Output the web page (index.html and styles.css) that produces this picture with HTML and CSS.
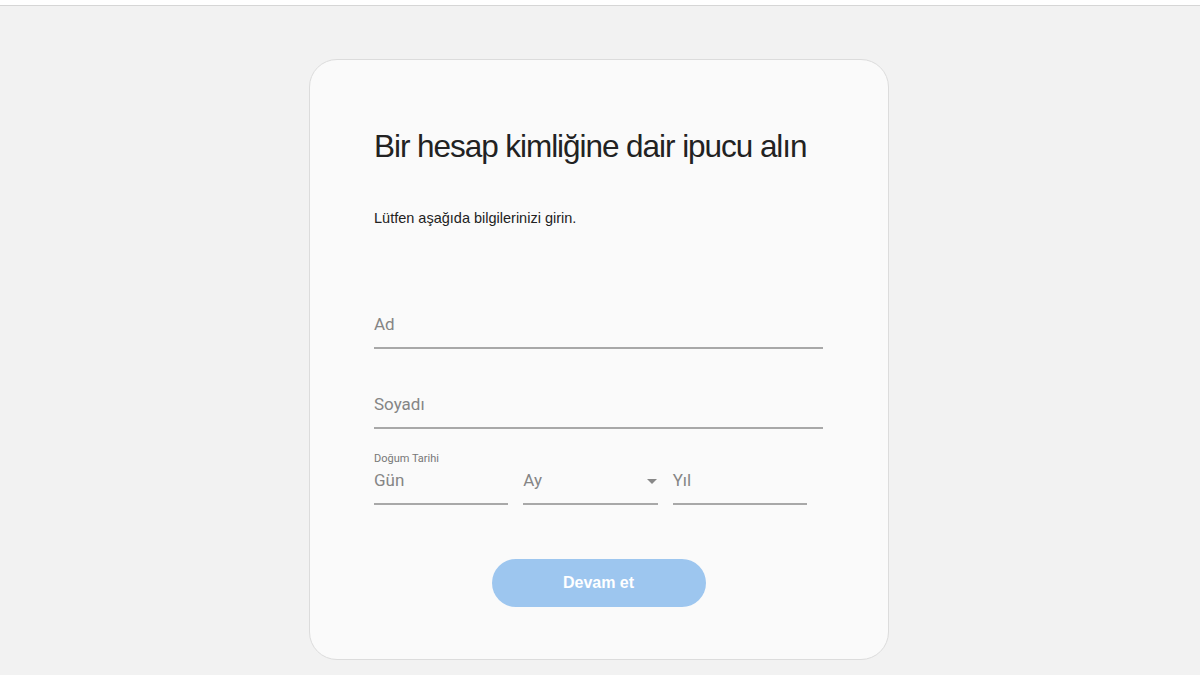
FILE: index.html
```html
<!DOCTYPE html>
<html lang="tr">
<head>
<meta charset="utf-8">
<link rel="stylesheet" href="styles.css">
</head>
<body>
<div class="topbar"></div>
<main class="page">
  <section class="card">
    <h1 class="title">Bir hesap kimliğine dair ipucu alın</h1>
    <p class="subtitle">Lütfen aşağıda bilgilerinizi girin.</p>
    <div class="field first"><span class="ph">Ad</span></div>
    <div class="field"><span class="ph">Soyadı</span></div>
    <div class="dob">
      <div class="dob-label">Doğum Tarihi</div>
      <div class="dob-row">
        <div class="field small"><span class="ph">Gün</span></div>
        <div class="field small select"><span class="ph">Ay</span><span class="caret"></span></div>
        <div class="field small"><span class="ph">Yıl</span></div>
      </div>
    </div>
    <div class="actions"><button class="btn">Devam et</button></div>
  </section>
</main>
</body>
</html>
```
FILE: styles.css
```css
html, body { margin: 0; padding: 0; }
body {
  background: #f2f2f2;
  font-family: "Liberation Sans", Arial, sans-serif;
  height: 675px;
  overflow: hidden;
}
.topbar {
  height: 5px;
  background: #ffffff;
  border-bottom: 1px solid #d6d6d6;
}
.page {
  display: flex;
  justify-content: center;
  padding-top: 53px;
  padding-right: 2px;
}
.card {
  box-sizing: border-box;
  width: 580px;
  height: 601px;
  background: #fafafa;
  border: 1px solid #dcdcdc;
  border-radius: 28px;
  padding: 68px 65px 0 64px;
}
.title {
  margin: 0;
  font-weight: normal;
  font-size: 31.5px;
  line-height: 37px;
  color: #222;
  letter-spacing: -1.05px;
  white-space: nowrap;
}
.subtitle {
  margin: 44px 0 0 0;
  font-size: 14.5px;
  line-height: 18px;
  color: #222;
}
.field {
  box-sizing: border-box;
  border-bottom: 2px solid #a8a8a8;
  height: 36px;
  display: flex;
  align-items: flex-start;
  position: relative;
}
.field.first { margin-top: 86px; }
.field + .field { margin-top: 44px; }
.ph {
  font-family: Roboto, "Liberation Sans", sans-serif;
  font-size: 17px;
  line-height: 22px;
  color: #858585;
}
.dob { margin-top: 24px; }
.dob-label {
  font-family: Roboto, "Liberation Sans", sans-serif;
  font-size: 11px;
  line-height: 12px;
  color: #777;
}
.dob-row {
  display: flex;
  gap: 15px;
  width: 433px;
}
.field.small {
  flex: 1;
  height: 40px;
  padding-top: 4px;
}
.dob-row .field + .field { margin-top: 0; }
.caret {
  position: absolute;
  right: 1px;
  top: 14px;
  width: 0;
  height: 0;
  border-left: 5px solid transparent;
  border-right: 5px solid transparent;
  border-top: 5px solid #888;
}
.actions {
  display: flex;
  justify-content: center;
  margin-top: 54px;
}
.btn {
  width: 214px;
  height: 48px;
  border: none;
  border-radius: 24px;
  background: #9dc6ef;
  color: #fff;
  font-family: "Liberation Sans", Arial, sans-serif;
  font-weight: bold;
  font-size: 16px;
}
```
